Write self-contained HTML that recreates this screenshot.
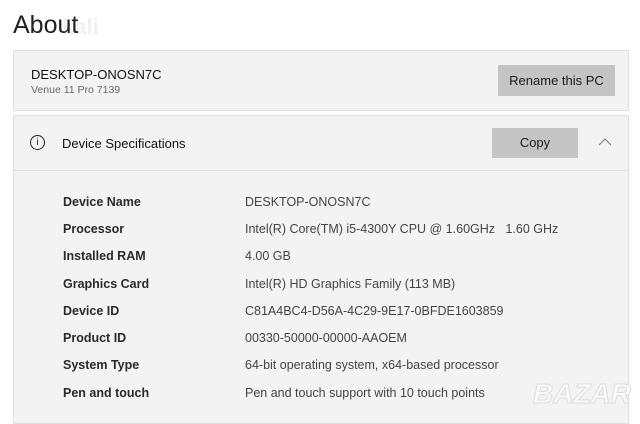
<!DOCTYPE html>
<html><head><meta charset="utf-8"><style>
*{margin:0;padding:0;box-sizing:border-box}
body{width:640px;height:424px;background:#fff;font-family:"Liberation Sans",sans-serif;color:#1a1a1a;position:relative;overflow:hidden}
.t{position:absolute;white-space:nowrap}
.card{position:absolute;left:13px;width:616px;background:#f3f3f3;border:1px solid #dedede;border-radius:2px}
.btn{position:absolute;background:#c4c4c4;font-size:13px;text-align:center}
.l{position:absolute;left:63px;font-size:12.5px;font-weight:bold;color:#2a2a2a}
.v{position:absolute;left:245px;font-size:12.5px;color:#444}
</style></head><body>
<div class="t" style="left:62px;top:14px;font-size:22px;font-weight:bold;color:#f0f0f0">kali</div>
<div class="t" style="left:13px;top:11px;font-size:25px;color:#222">About</div>
<div class="card" style="top:50px;height:61px">
 <div class="t" style="left:17px;top:16px;font-size:13px;color:#111">DESKTOP-ONOSN7C</div>
 <div class="t" style="left:17px;top:33px;font-size:10.5px;color:#666">Venue 11 Pro 7139</div>
 <div class="btn" style="left:484px;top:14px;width:117px;height:31px;line-height:31px">Rename this PC</div>
</div>
<div class="card" style="top:115px;height:309px">
 <div style="position:absolute;left:0;right:0;top:54px;border-top:1px solid #dedede"></div>
 <div class="t" style="left:16px;top:19px;width:15px;height:15px;border:1.3px solid #222;border-radius:50%;font-size:10px;line-height:13px;text-align:center">i</div>
 <div class="t" style="left:48px;top:20px;font-size:13px;color:#111">Device Specifications</div>
 <div class="btn" style="left:478px;top:12px;width:86px;height:30px;line-height:30px">Copy</div>
 <svg style="position:absolute;left:584px;top:22px" width="14" height="8"><path d="M1 7L7 1L13 7" stroke="#777" fill="none" stroke-width="1"/></svg>
</div>
<div class="l" style="top:195px">Device Name</div><div class="v" style="top:195px">DESKTOP-ONOSN7C</div>
<div class="l" style="top:222px">Processor</div><div class="v" style="top:222px">Intel(R) Core(TM) i5-4300Y CPU @ 1.60GHz &nbsp; 1.60 GHz</div>
<div class="l" style="top:249px">Installed RAM</div><div class="v" style="top:249px">4.00 GB</div>
<div class="l" style="top:277px">Graphics Card</div><div class="v" style="top:277px">Intel(R) HD Graphics Family (113 MB)</div>
<div class="l" style="top:304px">Device ID</div><div class="v" style="top:304px">C81A4BC4-D56A-4C29-9E17-0BFDE1603859</div>
<div class="l" style="top:331px">Product ID</div><div class="v" style="top:331px">00330-50000-00000-AAOEM</div>
<div class="l" style="top:358px">System Type</div><div class="v" style="top:358px">64-bit operating system, x64-based processor</div>
<div class="l" style="top:386px">Pen and touch</div><div class="v" style="top:386px">Pen and touch support with 10 touch points</div>
<div class="t" style="left:533px;top:378px;font-size:28px;font-weight:bold;color:#fafafa;font-style:italic;-webkit-text-stroke:1px #ddd">BAZAR</div>
</body></html>
